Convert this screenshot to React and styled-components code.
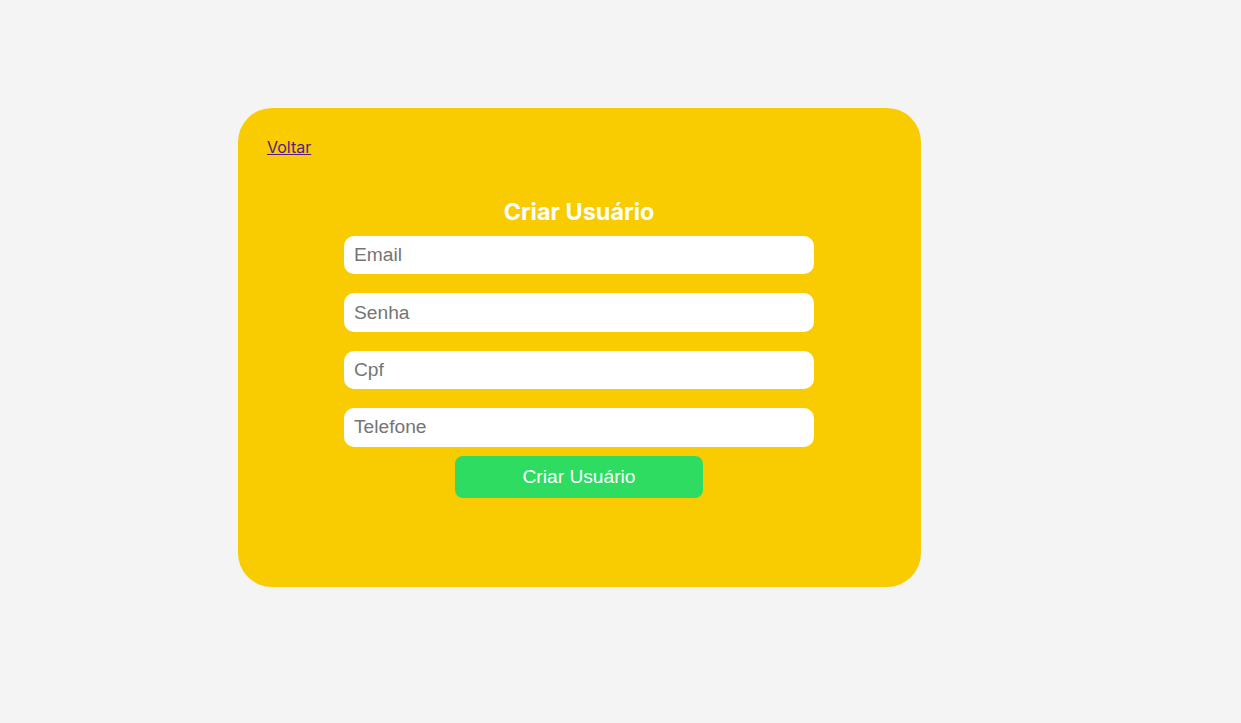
import React from "react";
import styled, { createGlobalStyle } from "styled-components";

const GlobalStyle = createGlobalStyle`
  body {
    margin: 0;
    background: #f4f4f4;
    font-family: "Liberation Sans", Arial, sans-serif;
  }
`;

const Page = styled.div`
  min-height: 723px;
  padding: 108px 0 0 238px;
  box-sizing: border-box;
`;

const Card = styled.div`
  width: 683px;
  height: 479px;
  box-sizing: border-box;
  padding: 30px 30px 30px 29px;
  background: #f8cc00;
  border-radius: 34px;
  display: flex;
  flex-direction: column;
`;

const BackLink = styled.a`
  align-self: flex-start;
  font-family: Inter, "Noto Sans", sans-serif;
  font-size: 16px;
  line-height: 19px;
  color: #551a8b;
  text-decoration: underline;
`;

const Title = styled.h2`
  margin: 41px 0 10px;
  text-align: center;
  font-family: Inter, "Noto Sans", sans-serif;
  font-weight: 700;
  font-size: 23.4px;
  line-height: 28px;
  color: #fff;
`;

const Form = styled.form`
  display: flex;
  flex-direction: column;
  align-items: center;
  gap: 19px;
`;

const Input = styled.input`
  width: 470px;
  height: 38.4px;
  box-sizing: border-box;
  border: none;
  border-radius: 10px;
  padding: 0 10px;
  background: #fff;
  font-family: "Liberation Sans", Arial, sans-serif;
  font-size: 19.2px;
  color: #333;
  outline: none;

  &::placeholder {
    color: #757575;
  }
`;

const Button = styled.button`
  margin-top: -9.4px;
  width: 248px;
  height: 42px;
  border: none;
  border-radius: 8px;
  background: #2edc62;
  color: #fff;
  font-family: "Liberation Sans", Arial, sans-serif;
  font-size: 19.2px;
  cursor: pointer;
`;

const fields = ["Email", "Senha", "Cpf", "Telefone"];

const App = () => {
  return (
    <Page>
      <GlobalStyle />
      <Card>
        <BackLink href="#">Voltar</BackLink>
        <Title>Criar Usuário</Title>
        <Form onSubmit={(e) => e.preventDefault()}>
          {fields.map((f) => (
            <Input key={f} placeholder={f} />
          ))}
          <Button type="submit">Criar Usuário</Button>
        </Form>
      </Card>
    </Page>
  );
};

export default App;
